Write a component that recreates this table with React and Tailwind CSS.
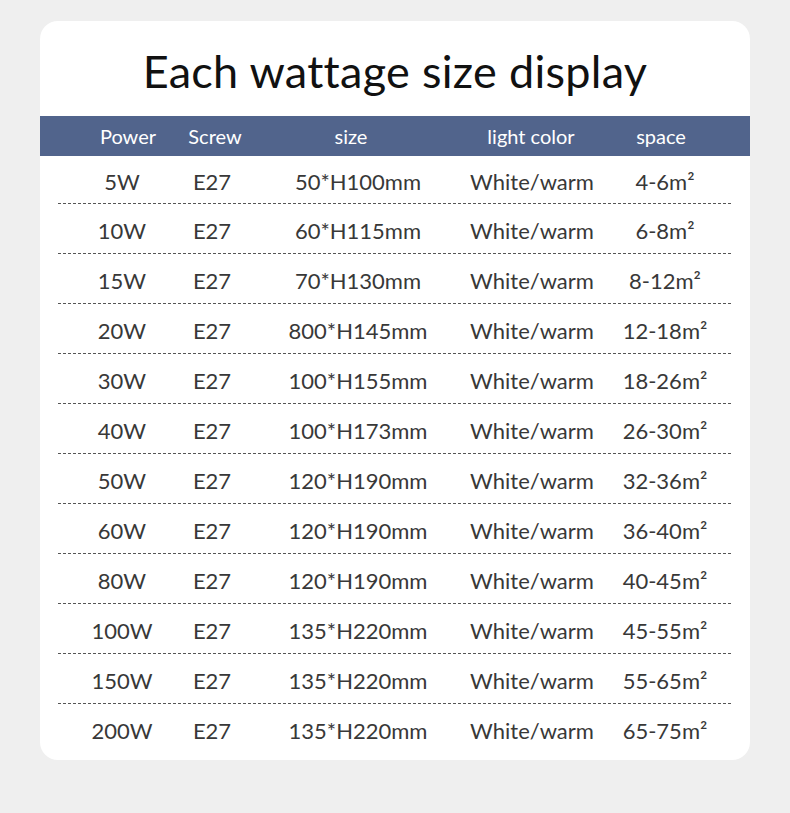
import React from 'react';

const rows = [
  ['5W', 'E27', '50*H100mm', 'White/warm', '4-6m²'],
  ['10W', 'E27', '60*H115mm', 'White/warm', '6-8m²'],
  ['15W', 'E27', '70*H130mm', 'White/warm', '8-12m²'],
  ['20W', 'E27', '800*H145mm', 'White/warm', '12-18m²'],
  ['30W', 'E27', '100*H155mm', 'White/warm', '18-26m²'],
  ['40W', 'E27', '100*H173mm', 'White/warm', '26-30m²'],
  ['50W', 'E27', '120*H190mm', 'White/warm', '32-36m²'],
  ['60W', 'E27', '120*H190mm', 'White/warm', '36-40m²'],
  ['80W', 'E27', '120*H190mm', 'White/warm', '40-45m²'],
  ['100W', 'E27', '135*H220mm', 'White/warm', '45-55m²'],
  ['150W', 'E27', '135*H220mm', 'White/warm', '55-65m²'],
  ['200W', 'E27', '135*H220mm', 'White/warm', '65-75m²'],
];

const headers = ['Power', 'Screw', 'size', 'light color', 'space'];

const App = () => {
  return (
    <div className="min-h-[813px] bg-[#efefef] pt-[21px] px-[40px] font-['Lato',sans-serif]">
      <div className="bg-white rounded-[18px] w-[710px] h-[739px] overflow-hidden">
        <h1 className="text-center text-[45px] text-[#111] pt-[24px] h-[95px] leading-[52px] tracking-[0.3px]">
          Each wattage size display
        </h1>

        {/* header bar */}
        <div className="h-[40px] bg-[#51648c] text-white text-[20px] pl-[44px] grid grid-cols-[88px_86px_186px_174px_86px] items-center">
          {headers.map((h) => (
            <div key={h} className="flex justify-center whitespace-nowrap">{h}</div>
          ))}
        </div>

        {rows.map((r, i) => (
          <div key={i}>
            {i > 0 && (
              <div className="mx-[18px] h-px bg-[repeating-linear-gradient(90deg,#555_0_3px,transparent_3px_5px)]" />
            )}
            <div className={`${i === 0 ? 'h-[47px]' : 'h-[49px]'} pt-[4px] pl-[38px] grid grid-cols-[88px_92px_200px_148px_118px] items-center text-[22px] text-[#383838]`}>
              {r.map((c, j) => (
                <div key={j} className="flex justify-center whitespace-nowrap">{c}</div>
              ))}
            </div>
          </div>
        ))}
      </div>
    </div>
  );
};

export default App;
